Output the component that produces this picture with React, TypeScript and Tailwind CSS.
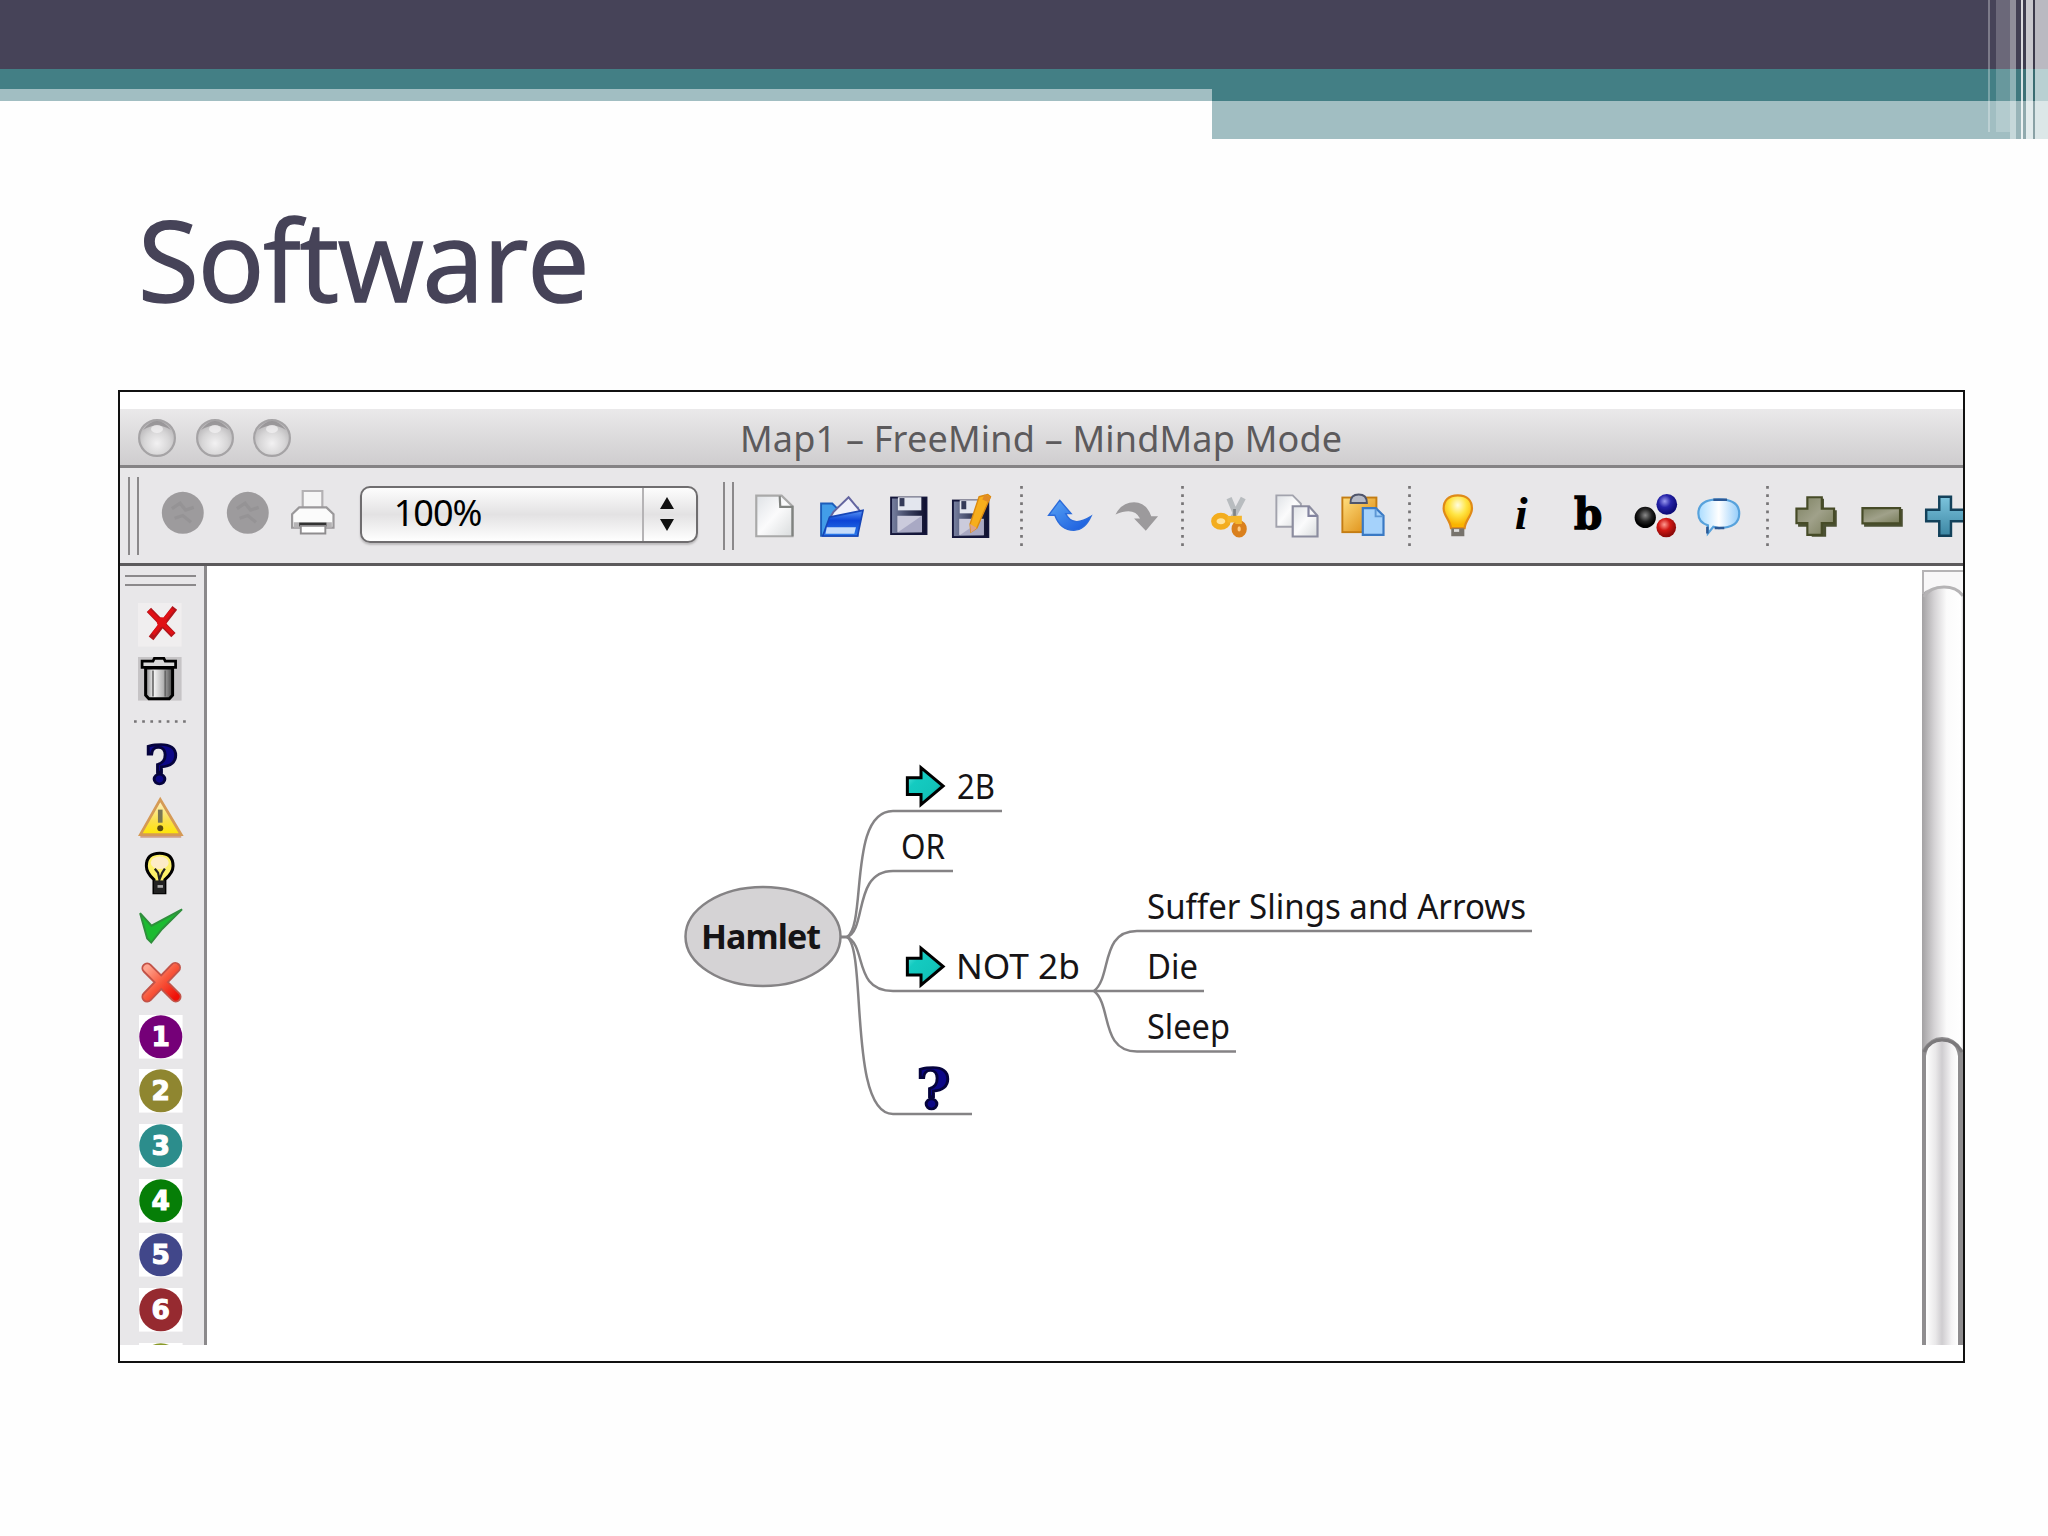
import type { ReactNode } from "react"

const lucida = "font-['Noto_Sans','Open_Sans',sans-serif]"

function Icon({ children, className = "" }: { children: ReactNode; className?: string }) {
  return (
    <svg viewBox="0 0 16 16" className={`block h-[43.6px] w-[43.6px] shrink-0 overflow-visible ${className}`}>
      {children}
    </svg>
  )
}

// Shared gradients for the toolbar and palette icons
function Gradients() {
  return (
    <svg className="absolute h-0 w-0">
      <defs>
        <linearGradient id="paper" x1="0" y1="0" x2="1" y2="1">
          <stop offset="0" stopColor="#dfe2e6" />
          <stop offset=".5" stopColor="#fbfbfc" />
          <stop offset="1" stopColor="#d9dcdd" />
        </linearGradient>
        <linearGradient id="disk" x1="0" y1="0" x2="1" y2="0">
          <stop offset="0" stopColor="#7a83a3" />
          <stop offset=".5" stopColor="#3c4260" />
          <stop offset="1" stopColor="#0c0d2c" />
        </linearGradient>
        <linearGradient id="folder" x1="0" y1="0" x2="0" y2="1">
          <stop offset="0" stopColor="#5a96f5" />
          <stop offset=".4" stopColor="#0d44d6" />
          <stop offset="1" stopColor="#2a7bea" />
        </linearGradient>
        <linearGradient id="undo" x1="0" y1="0" x2="1" y2="1">
          <stop offset="0" stopColor="#5aa5f5" />
          <stop offset="1" stopColor="#1557dc" />
        </linearGradient>
        <linearGradient id="board" x1="0" y1="0" x2="1" y2="1">
          <stop offset="0" stopColor="#ffdf80" />
          <stop offset="1" stopColor="#d98205" />
        </linearGradient>
        <radialGradient id="glow" cx=".5" cy=".3" r=".6">
          <stop offset="0" stopColor="#fffce0" />
          <stop offset=".5" stopColor="#ffe646" />
          <stop offset="1" stopColor="#fab400" />
        </radialGradient>
        <radialGradient id="ballBlack" cx=".5" cy=".4" r=".5">
          <stop offset="0" stopColor="#8a8a8a" />
          <stop offset=".6" stopColor="#222" />
          <stop offset="1" stopColor="#000" />
        </radialGradient>
        <radialGradient id="ballBlue" cx=".4" cy=".35" r=".6">
          <stop offset="0" stopColor="#9a9af0" />
          <stop offset=".5" stopColor="#2523a8" />
          <stop offset="1" stopColor="#0d0b78" />
        </radialGradient>
        <radialGradient id="ballRed" cx=".4" cy=".35" r=".6">
          <stop offset="0" stopColor="#ff9a90" />
          <stop offset=".5" stopColor="#d01713" />
          <stop offset="1" stopColor="#8f0a0a" />
        </radialGradient>
        <linearGradient id="bubble" x1="0" y1="0" x2="1" y2="0">
          <stop offset="0" stopColor="#a9dcff" />
          <stop offset=".5" stopColor="#ffffff" />
          <stop offset="1" stopColor="#93ccfa" />
        </linearGradient>
        <linearGradient id="olive" x1="0" y1="0" x2="1" y2="1">
          <stop offset="0" stopColor="#7d8161" />
          <stop offset=".5" stopColor="#a0a18a" />
          <stop offset="1" stopColor="#777b58" />
        </linearGradient>
        <linearGradient id="sky" x1="0" y1="0" x2="0" y2="1">
          <stop offset="0" stopColor="#7cc4dd" />
          <stop offset="1" stopColor="#3c86a3" />
        </linearGradient>
        <linearGradient id="can" x1="0" y1="0" x2="1" y2="0">
          <stop offset="0" stopColor="#888" />
          <stop offset=".3" stopColor="#f4f4f4" />
          <stop offset=".65" stopColor="#b5b5b5" />
          <stop offset="1" stopColor="#444" />
        </linearGradient>
        <linearGradient id="warn" x1="0" y1="0" x2="0" y2="1">
          <stop offset="0" stopColor="#fdf3d0" />
          <stop offset=".6" stopColor="#fbe04b" />
          <stop offset="1" stopColor="#ffe600" />
        </linearGradient>
        <linearGradient id="cross" x1="0" y1="0" x2="1" y2="1">
          <stop offset="0" stopColor="#ffa590" />
          <stop offset=".5" stopColor="#f8583c" />
          <stop offset="1" stopColor="#ef1008" />
        </linearGradient>
        <linearGradient id="teal" x1="0" y1="0" x2="1" y2="1">
          <stop offset="0" stopColor="#6ff0e8" />
          <stop offset=".3" stopColor="#14cbc1" />
          <stop offset=".65" stopColor="#12c4ba" />
          <stop offset="1" stopColor="#077a74" />
        </linearGradient>
        <radialGradient id="lamp" cx=".5" cy=".65" r=".6">
          <stop offset="0" stopColor="#f2f1f2" />
          <stop offset=".6" stopColor="#d6d5d6" />
          <stop offset="1" stopColor="#b8b6b8" />
        </radialGradient>
      </defs>
    </svg>
  )
}

function Header() {
  return (
    <header className="relative h-[139px] w-full">
      <div className="h-[69px] bg-[#464358]" />
      <div className="h-5 bg-[#437f85]" />
      <div className="flex h-3">
        <div className="w-[1212px] bg-[#a1bec2]" />
        <div className="flex-1 bg-[#437f85]" />
      </div>
      <div className="ml-[1212px] h-[38px] bg-[#a1bec2]" />
      <div className="absolute top-0 right-0 flex h-[139px] w-[60px]">
        <div className="h-[132px] w-[2px] bg-white/30" />
        <div className="w-[6px]" />
        <div className="h-[132px] w-[14px] bg-white/20" />
        <div className="w-[6px] bg-white/40" />
        <div className="w-[5px] bg-black/5" />
        <div className="w-[2px] bg-white/80" />
        <div className="w-[3px] bg-black/10" />
        <div className="w-[7px] bg-white/70" />
        <div className="w-[2px] bg-black/15" />
        <div className="w-[13px] bg-white/63" />
      </div>
    </header>
  )
}

function TitleBar() {
  return (
    <div className="flex h-[59px] items-center border-b-[3px] border-[#858385] bg-linear-to-b from-[#eae9ea] to-[#cfcdcf] pl-[18px]">
      <div className="flex w-[600px] gap-[19.500px] pt-[1px]">
        {[0, 1, 2].map((i) => (
          <svg key={i} viewBox="0 0 38 38" className="h-[38px] w-[38px]">
            <circle cx="19" cy="19" r="17.9" fill="url(#lamp)" stroke="#a5a3a5" strokeWidth="2.2" />
            <path d="M5 11Q19 -7 33 11Q19 2 5 11Z" fill="#8d8b8d" opacity=".75" />
            <ellipse cx="19" cy="10" rx="6" ry="4" fill="#f3f2f3" opacity=".7" />
          </svg>
        ))}
      </div>
      <span className={`${lucida} ml-[2px] pt-[4px] text-[36px] leading-none tracking-[0.2px] whitespace-nowrap text-[#5c5a5c]`}>
        Map1 – FreeMind – MindMap Mode
      </span>
    </div>
  )
}

function Grip({ className = "" }: { className?: string }) {
  return <div className={`w-[11px] shrink-0 border-x-[2.500px] border-[#8b898b] ${className}`} />
}

function Separator({ className = "" }: { className?: string }) {
  return (
    <svg viewBox="0 0 3 60" className={`h-[60px] w-[3px] shrink-0 ${className}`}>
      <path d="M1.5 0V60" stroke="#777577" strokeWidth="2.7" strokeDasharray="2.7 5.48" />
    </svg>
  )
}

function NavDot() {
  return (
    <Icon>
      <circle cx="8" cy="8" r="7.7" fill="#9d9b9d" />
      <path d="M4 6.500L7 4.500L9 7L12 6M5 10L8 9L11 11.500" stroke="#959395" strokeWidth="1.200" fill="none" />
    </Icon>
  )
}

function Disk() {
  return (
    <>
      <rect x="1.500" y="1.300" width="13" height="13.400" fill="url(#disk)" stroke="#14163a" strokeWidth=".7" />
      <rect x="4" y="1.200" width="8.600" height="4.800" fill="#e3e6ee" />
      <rect x="4.600" y="1.500" width="1.800" height="3" fill="#343a58" />
      <rect x="3.800" y="8" width="9" height="6" fill="#cbcbdc" />
      <path d="M4 14L12.800 8V14Z" fill="#a9a9c4" />
    </>
  )
}

function ZoomBox() {
  return (
    <div className="mb-[2px] ml-[25px] flex h-[57px] w-[338px] shrink-0 rounded-[10px] border-[2.500px] border-[#6f6d6f] bg-linear-to-b from-[#fdfdfd] via-[#e3e2e3] to-[#ffffff] shadow-[0_2px_2px_#bdbbbd]">
      <div className={`${lucida} flex flex-1 items-center border-r-2 border-[#b5b3b5] pb-[3px] pl-[32px] text-[36px] leading-none tracking-[-1px] text-black`}>
        100%
      </div>
      <div className="flex w-[52px] items-center justify-center pr-[5px] pb-[2px]">
        <svg viewBox="0 0 14 34" className="h-[34px] w-[14px]">
          <path d="M7 0L14 12H0ZM7 34L0 22H14Z" fill="#111" />
        </svg>
      </div>
    </div>
  )
}

function Toolbar() {
  return (
    <div className="flex h-[98px] items-center overflow-hidden border-b-[3px] border-[#5c5a5c] bg-[#e8e7e9] pl-[8px]">
      <Grip className="h-[78px]" />
      <div className="ml-[22px] flex gap-[21.500px] pb-[6px]">
        <NavDot />
        <NavDot />
        <Icon>
          <path d="M4.300 6V0H11.500V6" fill="#f6f6f6" stroke="#b3b1b3" strokeWidth=".8" />
          <path d="M3 6H13L15.600 8.500V13.500H.4V8.500Z" fill="#fbfbfb" stroke="#9a989a" strokeWidth=".8" />
          <path d="M1 11.500H15V13.500H1Z" fill="#b5b3b5" />
          <path d="M3 11.600H13V13H3Z" fill="#333" />
          <path d="M3.600 12.800H12.600V15.600H3.600Z" fill="#fff" stroke="#8f8d8f" strokeWidth=".7" />
        </Icon>
      </div>
      <ZoomBox />
      <Grip className="ml-[25px] h-[68px]" />
      <div className="ml-[19px] flex gap-[22px]">
        <Icon>
          <path d="M1.200.6H10.500L14.500 4.500V15.500H1.200Z" fill="url(#paper)" stroke="#a9a9a9" strokeWidth=".8" />
          <path d="M9.800.8L10 4.700H14.500V15.500" fill="none" stroke="#808380" strokeWidth=".8" />
        </Icon>
        <Icon className="ml-[2px]">
          <path d="M.4 3.500H4.500L6 5H13.800V15.300H.4Z" fill="#429de8" stroke="#1c5dba" strokeWidth=".7" />
          <path d="M5 6.500L10.500 1.200L14.500 6V9H3.500Z" fill="#f0f0fa" stroke="#6465a0" strokeWidth=".7" />
          <path d="M3.500 8.500L15.800 6L13.800 15.400H1Z" fill="url(#folder)" stroke="#1746b7" strokeWidth=".6" />
          <path d="M2.500 12.200H13.200L12.600 14.600H2Z" fill="#c5dcfa" />
        </Icon>
        <Icon className="ml-[1px]"><Disk /></Icon>
        <Icon className="ml-[-2px]">
          <g transform="translate(-.8 1.100)"><Disk /></g>
          <path d="M10.300 1L13.500.2L14.500 1L9.500 12.500L7.300 14L7 11Z" fill="#f7ae1c" stroke="#db8a10" strokeWidth=".5" />
          <path d="M7 11L9.500 12.500L7.300 14.200Z" fill="#dba28c" />
          <path d="M12.300.2L14.600 1.200L13.800 3L11.500 2Z" fill="#e08b25" />
        </Icon>
      </div>
      <Separator className="ml-[26px]" />
      <div className="ml-[25px] flex gap-[23px]">
        <Icon>
          <path d="M4.300 2.300L8.500 7.200H6.500Q9 12.500 15.800 8.200Q13.500 13.300 9.500 13.300Q4.500 13.300 2.500 7.800L.2 7.800Z" fill="url(#undo)" stroke="#2c6cdb" strokeWidth=".5" />
        </Icon>
        <Icon>
          <path d="M.2 7.500Q2.500 3 7 3Q11.500 3 13.300 8.200H15.800L11.300 13.500L7 9H9.200Q7 4.500.2 7.500Z" fill="#9c9a9c" />
        </Icon>
      </div>
      <Separator className="ml-[23px]" />
      <div className="ml-[26px] flex gap-[21.500px]">
        <Icon>
          <path d="M7 1.500L9.500 7.500M12.200 1.500L8.500 8.500" stroke="#b8bcbf" strokeWidth="2" fill="none" />
          <path d="M9 5.500V9" stroke="#7e8386" strokeWidth="1" />
          <ellipse cx="4" cy="10" rx="2.600" ry="2.100" fill="#ffe39b" stroke="#f3ad1e" strokeWidth="2" />
          <ellipse cx="10.700" cy="12.800" rx="1.700" ry="2.100" fill="#ffcb80" stroke="#da801d" strokeWidth="2.200" />
          <path d="M6.400 9.300L10.500 9.200V11" stroke="#f5b62b" strokeWidth="2.400" fill="none" />
        </Icon>
        <Icon>
          <path d="M.5.500H6.500L9.500 3.500V12H.5Z" fill="url(#paper)" stroke="#a2a3ad" strokeWidth=".7" />
          <path d="M6.500 4.500H12.500L15.600 8V15.600H6.500Z" fill="url(#paper)" stroke="#8c8d9f" strokeWidth=".8" />
          <path d="M12.300 4.500V8H15.600" fill="none" stroke="#8384a0" strokeWidth=".8" />
        </Icon>
        <Icon>
          <rect x=".5" y="1.300" width="12.500" height="12.700" fill="url(#board)" stroke="#c47d13" strokeWidth=".7" />
          <path d="M3.500 3.300Q3.500.2 6.500.2Q9.500.2 9.500 3.300Z" fill="#b6bac6" stroke="#4f556b" strokeWidth=".7" />
          <path d="M8 5.200H12.800L15.600 8V15H8Z" fill="#a5d2fb" stroke="#3979c4" strokeWidth=".8" />
          <path d="M12.700 5.500V8.200H15.500" fill="none" stroke="#5d97d5" strokeWidth=".7" />
        </Icon>
      </div>
      <Separator className="ml-[24px]" />
      <div className="ml-[25px] flex gap-[22px]">
        <Icon>
          <path d="M8 .5C4.500.5 2.800 2.500 2.800 5.300C2.800 8 5.200 9.500 5.500 12.500H10.500C10.800 9.500 13.200 8 13.200 5.300C13.200 2.500 11.500.5 8 .5Z" fill="url(#glow)" stroke="#df8a18" strokeWidth=".8" />
          <path d="M5.600 12.600H10.400V15.500H5.600Z" fill="#77736c" />
          <path d="M6.600 13.400H8.500" stroke="#ddd" />
        </Icon>
        <Icon>
          <text x="4.700" y="13" fontSize="17" className="font-['Liberation_Serif',serif] font-bold italic">i</text>
        </Icon>
        <Icon>
          <text x="2.600" y="12.900" fontSize="15.500" stroke="#000" strokeWidth=".5" textLength="10.400" lengthAdjust="spacingAndGlyphs" className="font-['DejaVu_Serif',serif] font-bold">b</text>
        </Icon>
        <Icon>
          <path d="M5 9L12 12.500M5 8L12 4M12 4V12" stroke="#eee" strokeWidth="2" />
          <circle cx="4.500" cy="8.600" r="3.900" fill="url(#ballBlack)" />
          <circle cx="12.400" cy="3.800" r="3.800" fill="url(#ballBlue)" />
          <circle cx="12.200" cy="12.300" r="3.600" fill="url(#ballRed)" />
        </Icon>
        <Icon className="ml-[-2px]">
          <path d="M8 2Q15.500 2 15.500 7.200Q15.500 12.500 8 12.500L6 12L4 14.500V11.500Q.5 10.500.5 7.200Q.5 2 8 2Z" fill="url(#bubble)" stroke="#57a2dc" strokeWidth=".8" />
          <path d="M6 2.100H11M6.500 12.500H10M3.800 14.500V12" stroke="#2c5995" strokeWidth=".9" />
        </Icon>
      </div>
      <Separator className="ml-[26px]" />
      <div className="ml-[24.500px] flex gap-[23px]">
        <Icon>
          <path d="M5.500 1.700H11V6H15.700V12H11.800V15.700H6.500V12H1.500V6H5.500Z" fill="#4b5033" />
          <path d="M4.900 1.200H10.200V5.400H14.700V10.700H10.200V15H4.900V10.700H.9V5.400H4.900Z" fill="url(#olive)" stroke="#464b27" strokeWidth=".8" />
        </Icon>
        <Icon>
          <path d="M1.500 5.500H15.700V12H1.500Z" fill="#4b5033" />
          <path d="M.9 5.200H14.700V10.800H.9Z" fill="url(#olive)" stroke="#464b27" strokeWidth=".8" />
        </Icon>
        <Icon className="ml-[-3px]">
          <path d="M5.600 1H9.900V5.800H15V10H9.900V15.300H5.600V10H.8V5.800H5.600Z" fill="url(#sky)" stroke="#13415a" strokeWidth=".9" />
        </Icon>
      </div>
    </div>
  )
}

function QuestionMark() {
  return (
    <text x="2" y="15.300" fontSize="19.500" textLength="12.400" lengthAdjust="spacingAndGlyphs" fill="#0c0787" stroke="#05033c" strokeWidth="1" className="font-['DejaVu_Serif',serif] font-bold">
      ?
    </text>
  )
}

const priorities = [
  { n: 1, color: "#750078" },
  { n: 2, color: "#8f8630" },
  { n: 3, color: "#2c8d8c" },
  { n: 4, color: "#067e07" },
  { n: 5, color: "#41478a" },
  { n: 6, color: "#962a30" },
]

function Palette() {
  return (
    <aside className="flex w-[87px] shrink-0 flex-col overflow-hidden border-r-[3px] border-[#8b898b] bg-[#e8e7e9] pt-[9px]">
      <div className="ml-[5px] h-[11px] w-[71px] shrink-0 border-y-[2.500px] border-[#8b898b]" />
      <div className="mt-[16.500px] ml-[18px] flex flex-col gap-[11px]">
        <Icon>
          <rect width="16" height="16" fill="#f0eeef" />
          <path d="M4 2.500L13 11.800M13.500 1.800L4.800 13" stroke="#b3141b" strokeWidth="2.200" />
          <path d="M4 2.800L12.800 11.300M12.800 2.200L5.500 11.500" stroke="#e01015" strokeWidth="1.300" />
          <circle cx="8.700" cy="7" r="1.800" fill="#e01015" />
        </Icon>
        <Icon>
          <rect width="16" height="16" fill="#c6c4c6" />
          <path d="M2.800 4H12.700V14L11.500 15.300H4L2.800 14Z" fill="url(#can)" stroke="#000" strokeWidth="1.100" />
          <path d="M1.500 1.500H5.500L6 .5H9.500L10 1.500H13.800V3.800H1.500Z" fill="#d9d9d9" stroke="#000" strokeWidth="1" />
          <path d="M5.500 5V14.500M10 5V14.500" stroke="#666" strokeWidth=".6" />
        </Icon>
      </div>
      <svg viewBox="0 0 54 3" className="mt-[19px] ml-[13.500px] h-[3px] w-[54px] shrink-0">
        <path d="M0 1.500H54" stroke="#777577" strokeWidth="2.700" strokeDasharray="2.700 5.480" />
      </svg>
      <div className="mt-[18.500px] ml-[18.500px] flex flex-col gap-[11.100px]">
        <Icon><QuestionMark /></Icon>
        <Icon>
          <path d="M7.800 1.300L15.500 14.200H.5Z" fill="url(#warn)" stroke="#d59a55" strokeWidth="1" />
          <path d="M.5 15H15.500" stroke="#cfa08a" strokeWidth=".7" />
          <path d="M7.800 5V9.800" stroke="#787555" strokeWidth="1.700" />
          <circle cx="7.800" cy="11.800" r="1.100" fill="#5a4a10" />
        </Icon>
        <Icon>
          <path d="M7.600.8Q2.700.8 2.700 5.500Q2.700 8 5.500 10.500V15.300H9.500V10.500Q12.500 8 12.500 5.500Q12.500.8 7.600.8Z" fill="#fdf169" stroke="#000" strokeWidth="1.100" />
          <ellipse cx="7.600" cy="4.300" rx="3.300" ry="2.300" fill="#fdecc7" />
          <path d="M5.500 10.800H9.500V15.500H5.500Z" fill="#222" />
          <path d="M5.800 6.500L7 8L7.500 10.500L8.500 8L9.500 6.500" stroke="#222" strokeWidth=".8" fill="none" />
          <path d="M6.800 13H8.800" stroke="#aaa" strokeWidth="1" />
        </Icon>
        <Icon>
          <path d="M.4 3L4.600 7.600L15.800 1.600L8.500 8.800L4.500 13.800L3 12.300Z" fill="#1cbb31" stroke="#2f8f3c" strokeWidth=".7" />
        </Icon>
        <Icon>
          <path d="M3 3L13.500 13.500M13.300 2.800L3 13.500" stroke="#c25348" strokeWidth="4.200" strokeLinecap="round" />
          <path d="M3 3L13.500 13.500M13.300 2.800L3 13.500" stroke="url(#cross)" strokeWidth="2.800" strokeLinecap="round" />
        </Icon>
        {priorities.map(({ n, color }) => (
          <Icon key={n}>
            <rect width="16" height="16" fill="#fff" />
            <circle cx="8" cy="8" r="7.900" fill={color} />
            <text x="8" y="11.400" fontSize="9.700" textAnchor="middle" fill="#fff" stroke="#fff" strokeWidth=".4" className="font-['DejaVu_Sans',sans-serif] font-bold">
              {n}
            </text>
          </Icon>
        ))}
        <Icon>
          <rect width="16" height="16" fill="#fff" />
          <circle cx="8" cy="8" r="7.900" fill="#8a9a2a" />
        </Icon>
      </div>
    </aside>
  )
}

const nodes = [
  { label: "2B", x: 957, y: 799, w: 38 },
  { label: "OR", x: 901, y: 859, w: 44 },
  { label: "NOT 2b", x: 956, y: 979, w: 124 },
  { label: "Suffer Slings and Arrows", x: 1147, y: 919, w: 379 },
  { label: "Die", x: 1147, y: 979, w: 51 },
  { label: "Sleep", x: 1147, y: 1039, w: 83 },
]

const edges = [
  "M847 937C867 925 848 811 893 811H1002",
  "M847 937C867 930 853 871 893 871H953",
  "M847 937C867 946 853 991 893 991H1204",
  "M847 937C867 949 848 1114 893 1114H972",
  "M1094 991C1112 977 1100 931 1137 931H1532",
  "M1094 991C1112 1005 1100 1051.500 1137 1051.500H1236",
]

function MindMap() {
  return (
    <svg viewBox="207 566 1715 779" className="h-[779px] w-[1715px] shrink-0">
      <g fill="none" stroke="#858385" strokeWidth="2.500">
        {edges.map((d) => <path key={d} d={d} />)}
        <path d="M840 937H850" strokeWidth="3" />
        <ellipse cx="763" cy="936.500" rx="77.500" ry="49.500" fill="#d5d3d5" />
      </g>
      <text x="701" y="949" fontSize="34" textLength="120" className={`${lucida} font-bold`} fill="#161416">Hamlet</text>
      {nodes.map(({ label, x, y, w }) => (
        <text key={label} x={x} y={y} fontSize="34" textLength={w} lengthAdjust="spacingAndGlyphs" className={lucida} fill="#161416">
          {label}
        </text>
      ))}
      {[765.5, 946].map((y) => (
        <g key={y} transform={`translate(906 ${y}) scale(2.730)`}>
          <path d="M.5 4.500H5.500V.8L13.600 7.500L5.500 14.300V10.600H.5Z" fill="url(#teal)" stroke="#000" strokeWidth="1.100" />
        </g>
      ))}
      <g transform="translate(911 1066.500) scale(2.730)">
        <QuestionMark />
      </g>
    </svg>
  )
}

function ScrollBar() {
  return (
    <div className="flex w-[41px] shrink-0 flex-col pt-[4px]">
      <svg viewBox="0 0 41 775" className="h-[775px] w-[41px]">
        <defs>
          <linearGradient id="track" x1="0" x2="1" y1="0" y2="0">
            <stop offset="0" stopColor="#a3a1a3" />
            <stop offset=".3" stopColor="#d5d3d5" />
            <stop offset=".6" stopColor="#fbfbfb" />
            <stop offset=".95" stopColor="#fff" />
            <stop offset="1" stopColor="#dcdadc" />
          </linearGradient>
          <linearGradient id="thumb" x1="0" x2="1" y1="0" y2="0">
            <stop offset="0" stopColor="#fff" />
            <stop offset=".3" stopColor="#e9e8e9" />
            <stop offset=".5" stopColor="#cfcdd0" />
            <stop offset=".8" stopColor="#f4f3f4" />
            <stop offset="1" stopColor="#fff" />
          </linearGradient>
        </defs>
        <rect width="41" height="775" fill="url(#track)" />
        <path d="M0 0H41V24Q33 16 22 16Q8 16 0 24Z" fill="#f8f7f8" />
        <path d="M1 24V1H41" fill="none" stroke="#b5b3b5" strokeWidth="2" />
        <path d="M2 27Q8 17 22 17Q35 17 41 26" fill="none" stroke="#b5b3b5" strokeWidth="3" />
        <path d="M0 480Q8 467 20 467Q33 467 41 480V775H0Z" fill="#8f8d8f" />
        <path d="M4 775V486Q6 471 20 471Q34 471 36 486V775Z" fill="url(#thumb)" />
        <path d="M2 482Q8 470 20 470Q33 470 40 482" fill="none" stroke="#7b797b" strokeWidth="3" />
      </svg>
    </div>
  )
}

export default function App() {
  return (
    <main className="h-[1536px] w-[2048px] overflow-hidden bg-[#fefefe]">
      <Gradients />
      <Header />
      <h1 className="mt-[58px] ml-[138px] h-[127px] font-['Open_Sans','Noto_Sans',sans-serif] text-[111px] leading-[124px] tracking-[-1.200px] text-[#464358] [-webkit-text-stroke:1.500px_#464358]">
        Software
      </h1>
      <section className="mt-[66px] ml-[118px] h-[973px] w-[1847px] overflow-hidden border-2 border-[#111] bg-white pt-[17px]">
        <TitleBar />
        <Toolbar />
        <div className="flex h-[779px]">
          <Palette />
          <MindMap />
          <ScrollBar />
        </div>
      </section>
    </main>
  )
}
